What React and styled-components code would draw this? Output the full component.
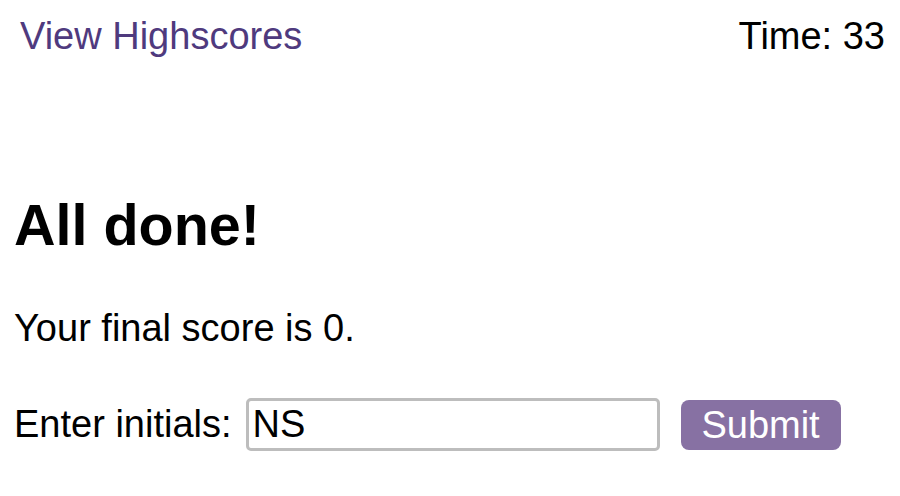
import React, { useState } from "react";
import styled, { createGlobalStyle } from "styled-components";

const GlobalStyle = createGlobalStyle`
  body {
    margin: 0;
    background: #fff;
    font-family: "Liberation Sans", Arial, sans-serif;
    color: #000;
  }
`;

const Page = styled.div`
  width: 900px;
  height: 496px;
  overflow: hidden;
`;

const TopBar = styled.header`
  display: flex;
  justify-content: space-between;
  align-items: baseline;
  padding: 14px 15px 0 20px;
  font-size: 38px;
  line-height: 44px;
`;

const HighscoreLink = styled.a`
  color: #4f3a7e;
  text-decoration: none;
  cursor: pointer;
`;

const Timer = styled.span`
  color: #000;
`;

const Content = styled.main`
  padding: 0 14px;
  margin-top: 135px;
`;

const Title = styled.h1`
  margin: 0;
  font-size: 57.5px;
  font-weight: 700;
  line-height: 64px;
`;

const Score = styled.p`
  margin: 49px 0 0;
  font-size: 38px;
  line-height: 44px;
`;

const InitialsForm = styled.form`
  display: flex;
  align-items: center;
  margin-top: 48px;
  font-size: 38px;
`;

const Label = styled.label`
  margin-right: 14px;
`;

const InitialsInput = styled.input`
  box-sizing: border-box;
  width: 414px;
  height: 53px;
  padding: 0 4px;
  border: 3px solid #bdbdbd;
  border-radius: 5px;
  font-family: inherit;
  font-size: 38px;
  color: #000;
  outline: none;
`;

const SubmitButton = styled.button`
  box-sizing: border-box;
  margin-left: 21px;
  width: 160px;
  height: 50px;
  border: none;
  border-radius: 8px;
  background: #8771a3;
  color: #fff;
  font-family: inherit;
  font-size: 38px;
  line-height: 50px;
  padding: 0;
  cursor: pointer;
`;

export default function App() {
  const [initials, setInitials] = useState("NS");
  return (
    <Page>
      <GlobalStyle />
      <TopBar>
        <HighscoreLink>View Highscores</HighscoreLink>
        <Timer>Time: 33</Timer>
      </TopBar>
      <Content>
        <Title>All done!</Title>
        <Score>Your final score is 0.</Score>
        <InitialsForm onSubmit={(e) => e.preventDefault()}>
          <Label htmlFor="initials">Enter initials:</Label>
          <InitialsInput
            id="initials"
            value={initials}
            onChange={(e) => setInitials(e.target.value)}
          />
          <SubmitButton type="submit">Submit</SubmitButton>
        </InitialsForm>
      </Content>
    </Page>
  );
}
